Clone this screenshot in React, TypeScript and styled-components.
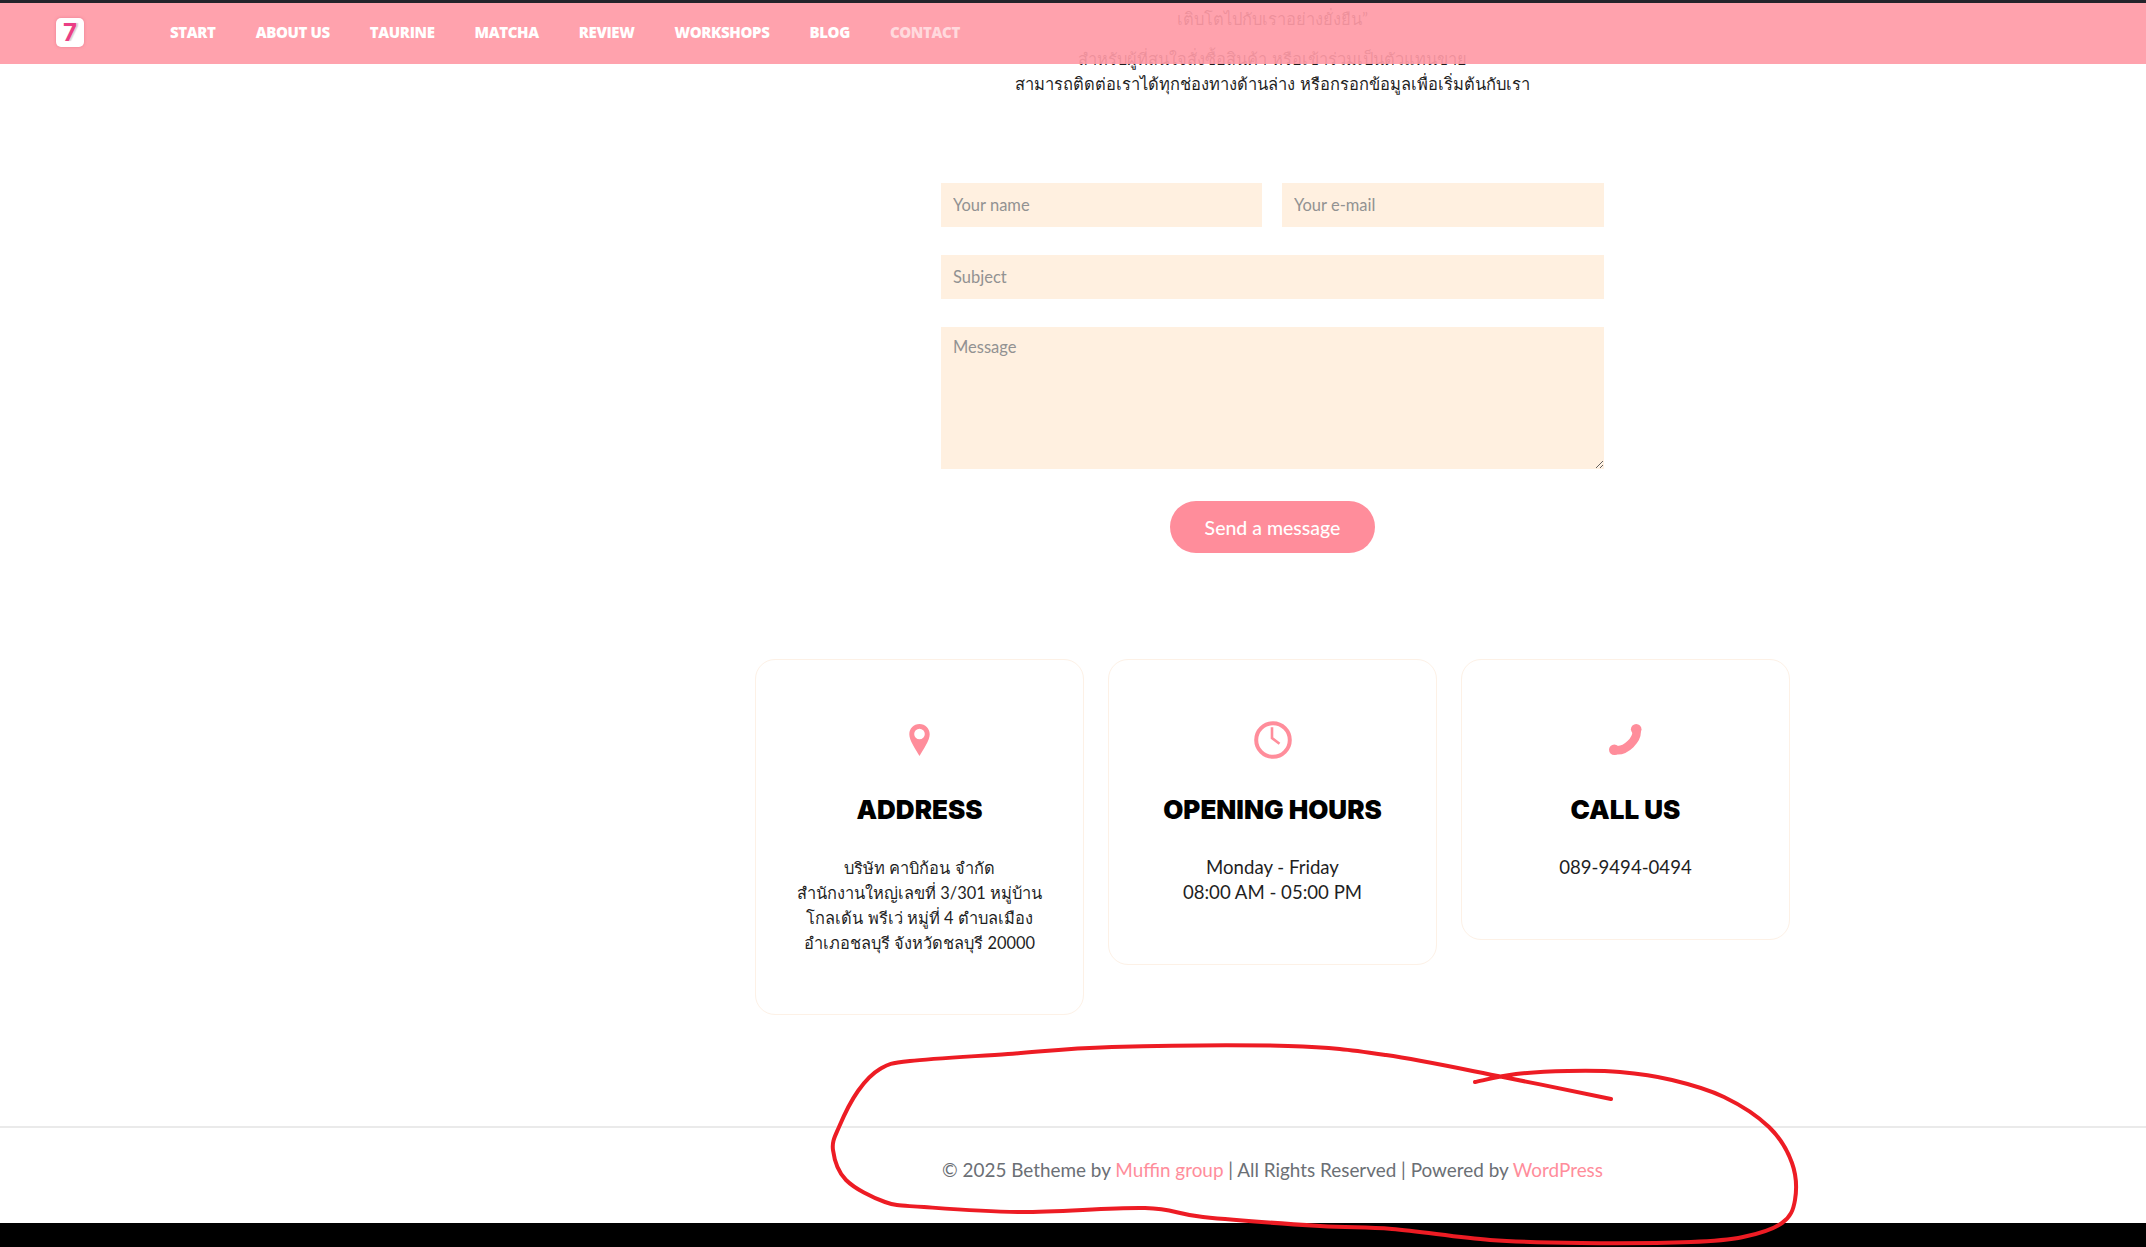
import React from 'react';
import styled, { createGlobalStyle } from 'styled-components';

const NAV_ITEMS = ['START', 'ABOUT US', 'TAURINE', 'MATCHA', 'REVIEW', 'WORKSHOPS', 'BLOG', 'CONTACT'];

// hand drawn red circle from the reference, page coordinates
const SCRIBBLE = [
  [1611, 1099], [1503, 1077], [1386, 1055], [1288, 1046], [1112, 1047], [1008, 1054], [910, 1061], [880, 1069],
  [858, 1091], [839, 1127], [833, 1150], [846, 1180], [885, 1202], [924, 1207], [1021, 1212], [1145, 1208],
  [1203, 1217], [1320, 1226], [1392, 1229], [1490, 1240], [1581, 1243], [1691, 1242], [1743, 1237], [1782, 1223],
  [1795, 1200], [1792, 1163], [1769, 1127], [1724, 1097], [1672, 1080], [1620, 1072], [1568, 1071], [1516, 1074],
  [1475, 1082],
];

const smoothPath = (pts: number[][]) => {
  let d = `M${pts[0][0]} ${pts[0][1]}`;
  for (let i = 0; i < pts.length - 1; i++) {
    const p0 = pts[i - 1] || pts[i];
    const p1 = pts[i];
    const p2 = pts[i + 1];
    const p3 = pts[i + 2] || p2;
    const c1 = [p1[0] + (p2[0] - p0[0]) / 6, p1[1] + (p2[1] - p0[1]) / 6];
    const c2 = [p2[0] - (p3[0] - p1[0]) / 6, p2[1] - (p3[1] - p1[1]) / 6];
    d += ` C${c1[0]} ${c1[1]} ${c2[0]} ${c2[1]} ${p2[0]} ${p2[1]}`;
  }
  return d;
};

const PinIcon = () => (
  <svg width="21" height="32" viewBox="0 0 21 32">
    <path
      fill="#ff8d9b"
      fillRule="evenodd"
      d="M10.500 0C4.700 0 .3 4.500.3 10.200.3 16.500 6.800 25.500 10.500 32 14.200 25.500 20.700 16.500 20.700 10.200 20.700 4.500 16.300 0 10.500 0zm0 4.700a5.300 5.300 0 1 1 0 10.600 5.300 5.300 0 0 1 0-10.600z"
    />
  </svg>
);

const ClockIcon = () => (
  <svg width="38" height="38" viewBox="0 0 38 38" fill="none" stroke="#ff8d9b">
    <circle cx="19" cy="19" r="16.800" strokeWidth="4" />
    <path d="M18 6.300V17l7.500 5.700" strokeWidth="2.600" />
  </svg>
);

const PhoneIcon = () => (
  <svg width="33" height="32" viewBox="0 0 33 32" fill="#ff8d9b">
    <circle cx="27.200" cy="5.300" r="5.300" />
    <circle cx="5.300" cy="25.700" r="5.300" />
    <path d="M27.500 6C29 15 17 28 6 26" fill="none" stroke="#ff8d9b" strokeWidth="8.500" />
  </svg>
);

const CARDS = [
  {
    title: 'ADDRESS',
    icon: <PinIcon />,
    thai: true,
    lines: ['บริษัท คาบิก้อน จำกัด', 'สำนักงานใหญ่เลขที่ 3/301 หมู่บ้าน', 'โกลเด้น พรีเว่ หมู่ที่ 4 ตำบลเมือง', 'อำเภอชลบุรี จังหวัดชลบุรี 20000'],
  },
  { title: 'OPENING HOURS', icon: <ClockIcon />, lines: ['Monday - Friday', '08:00 AM - 05:00 PM'] },
  { title: 'CALL US', icon: <PhoneIcon />, lines: ['089-9494-0494'] },
];

const App = () => {
  return (
    <Page>
      <GlobalStyle />
      <TopStrip />
      <Header>
        <Logo>
          <span>7</span>
        </Logo>
        <Nav>
          {NAV_ITEMS.map((item) => (
            <NavLink key={item} $active={item === 'CONTACT'}>
              {item}
            </NavLink>
          ))}
        </Nav>
      </Header>

      <Main>
        <Intro>
          <p>เติบโตไปกับเราอย่างยั่งยืน”</p>
          <p>
            สำหรับผู้ที่สนใจสั่งซื้อสินค้า หรือเข้าร่วมเป็นตัวแทนขาย
            <br />
            สามารถติดต่อเราได้ทุกช่องทางด้านล่าง หรือกรอกข้อมูลเพื่อเริ่มต้นกับเรา
          </p>
        </Intro>

        <Form>
          <FieldRow>
            <Input placeholder="Your name" />
            <Input placeholder="Your e-mail" />
          </FieldRow>
          <Input placeholder="Subject" />
          <TextArea placeholder="Message" />
          <SendButton type="button">Send a message</SendButton>
        </Form>

        <Cards>
          {CARDS.map((card) => (
            <Card key={card.title}>
              <IconBox>{card.icon}</IconBox>
              <CardTitle>{card.title}</CardTitle>
              <CardText $thai={card.thai}>
                {card.lines.map((line) => (
                  <span key={line}>{line}</span>
                ))}
              </CardText>
            </Card>
          ))}
        </Cards>
      </Main>

      <Footer>
        <FooterText>
          © 2025 Betheme by <a href="#">Muffin group</a> | All Rights Reserved | Powered by <a href="#">WordPress</a>
        </FooterText>
      </Footer>
      <BottomBand />

      <Scribble viewBox="0 0 2146 1247" width="2146" height="1247">
        <path d={smoothPath(SCRIBBLE)} fill="none" stroke="#ed1c24" strokeWidth="4" strokeLinecap="round" />
      </Scribble>
    </Page>
  );
};

export default App;

const FONT = `Lato, "Noto Sans", "Open Sans", sans-serif`;

const GlobalStyle = createGlobalStyle`
  html, body {
    margin: 0;
    padding: 0;
    background: #fff;
  }
  * {
    box-sizing: border-box;
  }
`;

const Page = styled.div`
  position: relative;
  width: 2146px;
  height: 1247px;
  overflow: hidden;
  display: flex;
  flex-direction: column;
  font-family: ${FONT};
  color: #1f1f1f;
`;

const TopStrip = styled.div`
  flex: none;
  height: 3px;
  background: #23232a;
`;

const Header = styled.header`
  position: absolute;
  top: 3px;
  left: 0;
  right: 0;
  height: 61px;
  display: flex;
  align-items: center;
  padding: 0 0 3px 56px;
  background: rgba(255, 154, 166, 0.92);
  z-index: 2;
`;

const Logo = styled.div`
  width: 28px;
  height: 29px;
  border-radius: 5px;
  background: #fff;
  box-shadow: 0 0 3px rgba(214, 90, 120, 0.5);
  display: flex;
  align-items: center;
  justify-content: center;
  font: 700 24px Inter, sans-serif;
  color: #ea3f85;
  text-shadow: 2px 0 1px #d6d6d6;
`;

const Nav = styled.nav`
  display: flex;
  gap: 40px;
  margin-left: 86px;
`;

const NavLink = styled.a<{ $active?: boolean }>`
  font-family: "Open Sans", sans-serif;
  font-size: 15px;
  font-weight: 800;
  letter-spacing: -0.36px;
  line-height: 20px;
  color: ${(p) => (p.$active ? 'rgba(255,255,255,0.6)' : '#fff')};
`;

const Main = styled.main`
  flex: 1;
  padding: 4px 0 0 399px;
  display: flex;
  flex-direction: column;
  align-items: center;
`;

const Intro = styled.div`
  text-align: center;
  font-size: 16.500px;
  line-height: 25px;

  p {
    margin: 0 0 15px;
  }
`;

const Form = styled.form`
  width: 663px;
  margin-top: 71px;
  display: flex;
  flex-direction: column;
  gap: 28px;
`;

const FieldRow = styled.div`
  display: grid;
  grid-template-columns: 321px 1fr;
  gap: 20px;
`;

const Input = styled.input`
  width: 100%;
  height: 44px;
  border: 0;
  border-radius: 0;
  padding: 0 12px 1px;
  background: #fff0e0;
  font: 16.500px ${FONT};
  outline: none;

  &::placeholder {
    color: #929292;
    opacity: 1;
  }
`;

const TextArea = styled.textarea`
  display: block;
  width: 100%;
  height: 142px;
  border: 0;
  padding: 10px 12px;
  background: #fff0e0;
  font: 16.500px/21px ${FONT};
  outline: none;

  &::placeholder {
    color: #929292;
    opacity: 1;
  }
`;

const SendButton = styled.button`
  align-self: center;
  width: 205px;
  height: 52px;
  margin-top: 4px;
  border: 0;
  border-radius: 26px;
  background: #ff8d9b;
  color: #fff;
  font: 500 19.500px ${FONT};
`;

const Cards = styled.div`
  width: 1035px;
  margin-top: 106px;
  display: grid;
  grid-template-columns: repeat(3, 329px);
  justify-content: space-between;
  align-items: start;
`;

const Card = styled.div`
  padding: 61px 20px 59px;
  border: 1px solid #fdf1e6;
  border-radius: 20px;
  text-align: center;
`;

const IconBox = styled.div`
  height: 38px;
  display: flex;
  align-items: center;
  justify-content: center;
`;

const CardTitle = styled.h3`
  margin: 36px 0 30px;
  font-family: Inter, sans-serif;
  font-size: 26px;
  font-weight: 900;
  line-height: 30px;
  color: #000;
`;

const CardText = styled.div<{ $thai?: boolean }>`
  display: flex;
  flex-direction: column;
  font-size: ${(p) => (p.$thai ? '16.4px' : '18.6px')};
  line-height: 25px;
`;

const Footer = styled.footer`
  flex: none;
  height: 97px;
  padding: 29px 0 0 399px;
  border-top: 2px solid #eaeaea;
  display: flex;
  justify-content: center;
`;

const FooterText = styled.div`
  font-size: 18.900px;
  line-height: 25px;
  color: #6b6f75;

  a {
    color: #ff8d9b;
    text-decoration: none;
  }
`;

const BottomBand = styled.div`
  flex: none;
  height: 24px;
  background: #000;
`;

const Scribble = styled.svg`
  position: absolute;
  top: 0;
  left: 0;
  z-index: 3;
  pointer-events: none;
`;
